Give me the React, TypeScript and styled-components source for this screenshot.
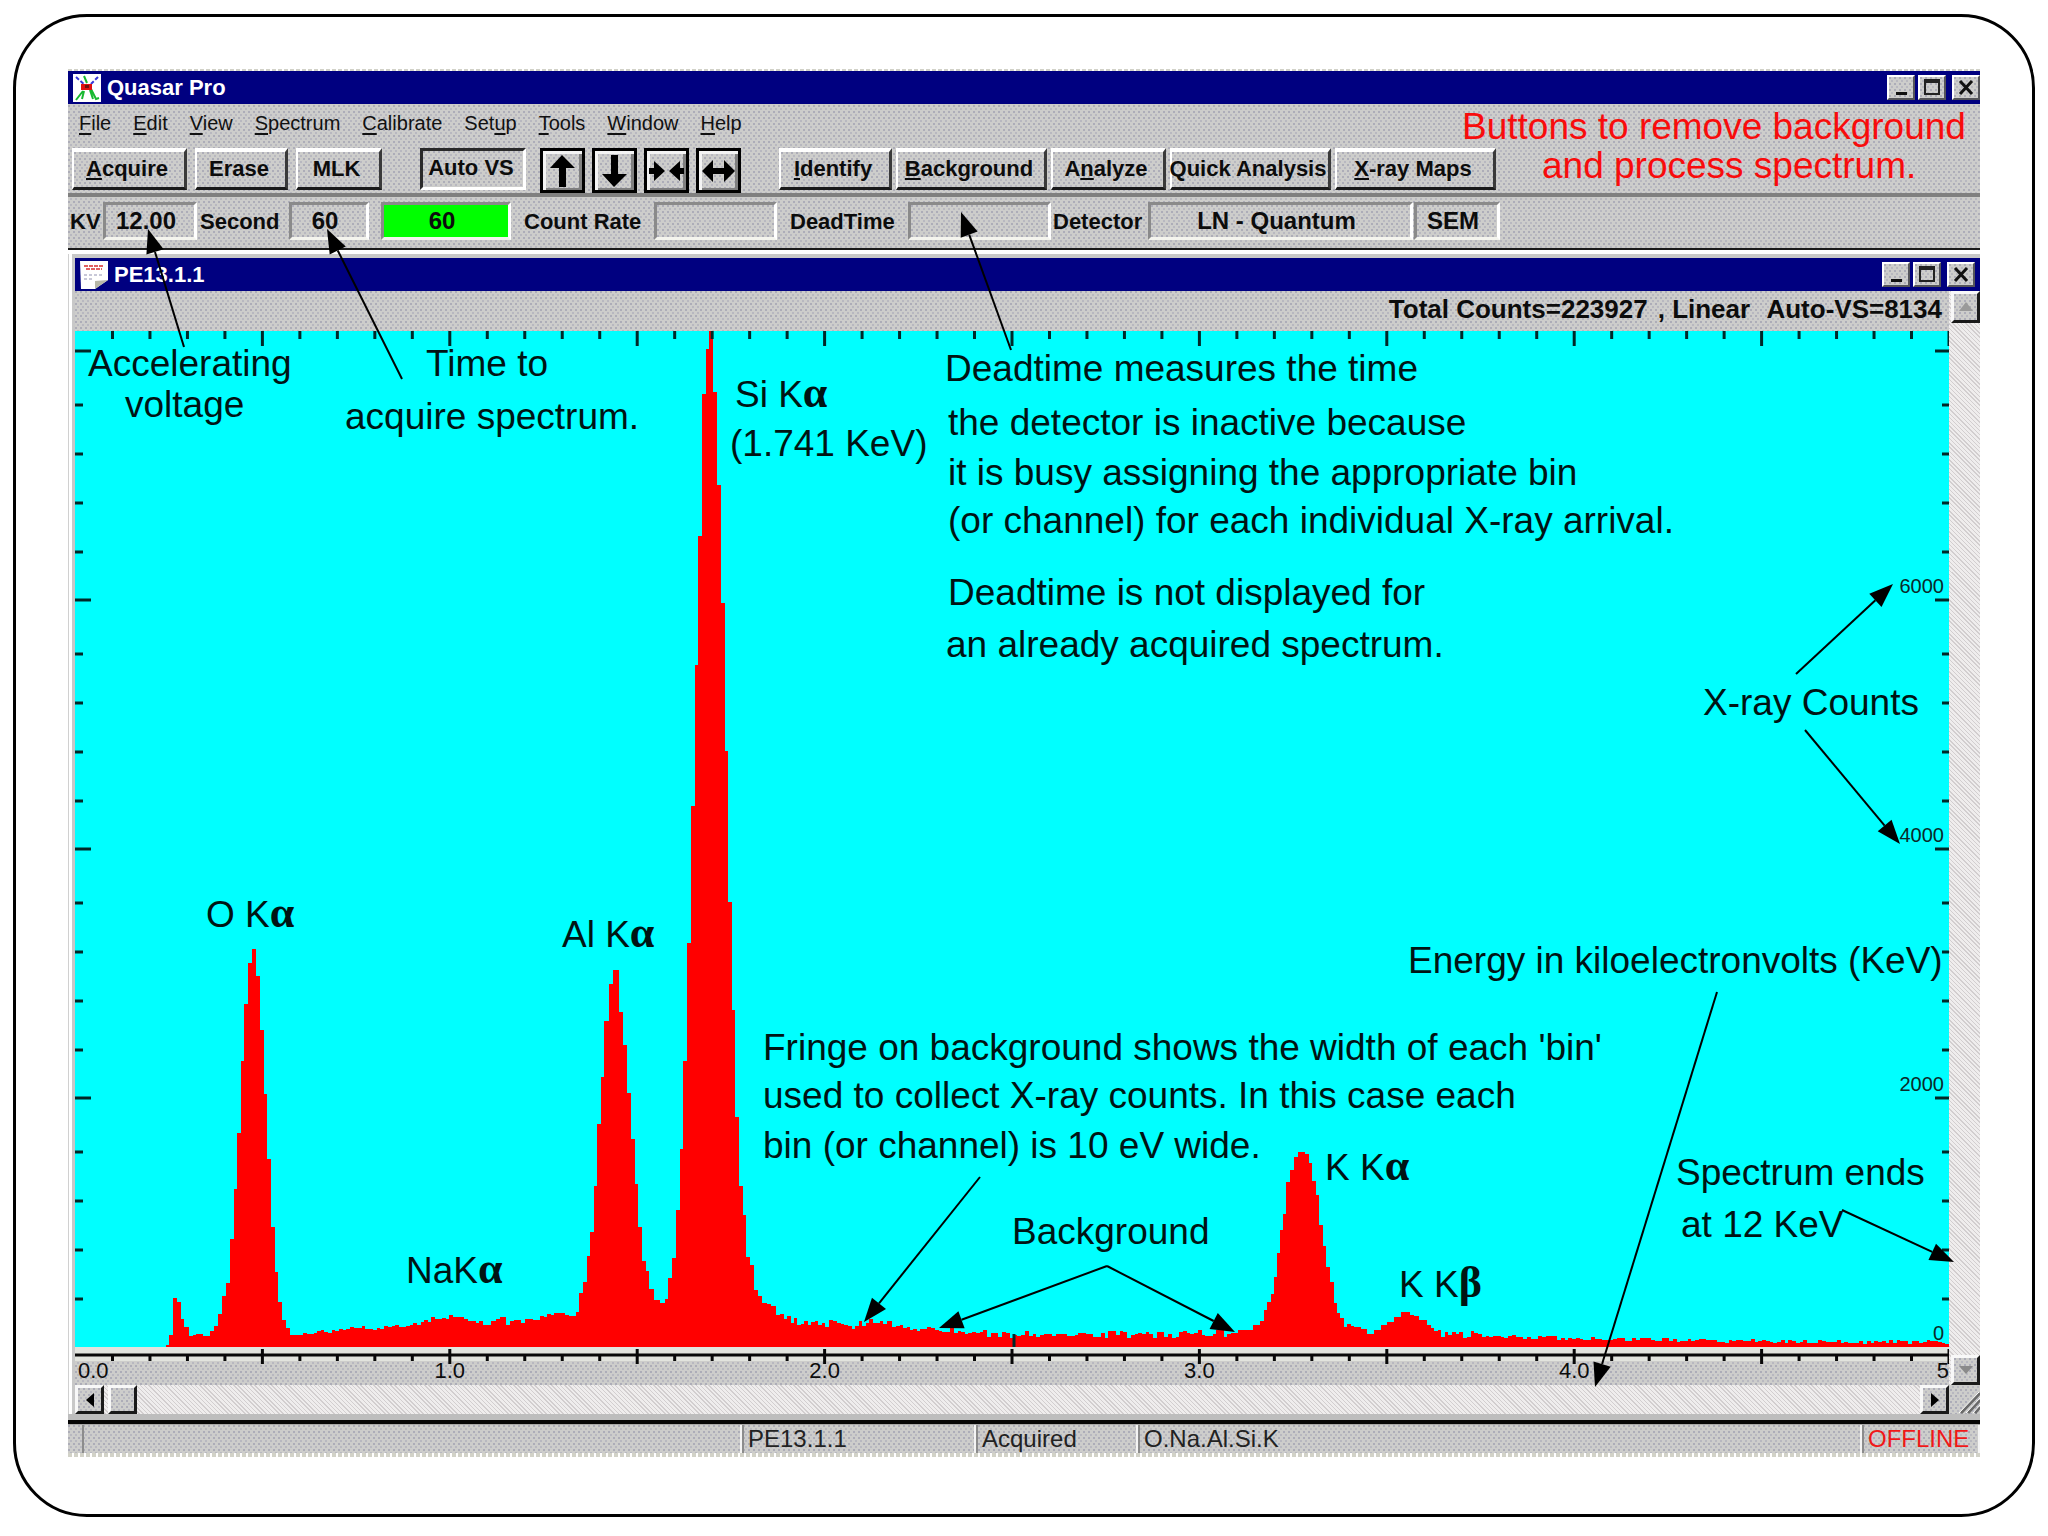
import React from "react";
import styled, { createGlobalStyle, css } from "styled-components";

const SANS = `"Liberation Sans", Arial, sans-serif`;

const GlobalStyle = createGlobalStyle`
  * { box-sizing: border-box; }
  body { margin: 0; background: #fff; }
  button, input { font: inherit; color: inherit; margin: 0; }
`;

const dither = css`
  background-color: #cdcdcb;
  background-image:
    radial-gradient(circle at 1px 1px, #adadb8 0, #adadb8 1px, transparent 1px),
    radial-gradient(circle at 3px 4px, #b8b8c0 0, #b8b8c0 1px, transparent 1px);
  background-size: 5px 6px;
`;

const trough = css`
  background-color: #efeded;
  background-image: repeating-linear-gradient(45deg, #d2cecf 0, #d2cecf 1px, transparent 1px, transparent 3px);
`;

const Page = styled.div`
  position: relative;
  padding: 14px 13px;
  font-family: ${SANS};
  color: #0c0c0c;
`;

const Frame = styled.div`
  border: 3px solid #000;
  border-radius: 74px;
  padding: 52px 52px 57px;
`;

const AppWindow = styled.main`
  ${dither}
  display: flex;
  flex-direction: column;
  overflow: hidden;
`;

const Dashes = styled.div<{ $size: number }>`
  height: ${(p) => p.$size}px;
  background: repeating-linear-gradient(90deg, #d2d2c8 0, #d2d2c8 4px, #fff 4px, #fff 6px);
`;

const TitleBar = styled.header<{ $right: number }>`
  display: flex;
  align-items: center;
  height: 33px;
  padding: 0 ${(p) => p.$right}px 0 5px;
  background: #000080;
  color: #fff;
`;

const Caption = styled.h1`
  flex: 1;
  margin: 0 0 0 6px;
  font-size: 22px;
  line-height: 32px;
  font-weight: bold;
`;

const WinButtons = styled.div`
  display: flex;
  gap: 3px;
`;

const WinButton = styled.button<{ $apart?: boolean }>`
  display: flex;
  align-items: center;
  justify-content: center;
  width: 28px;
  height: 25px;
  padding: 0;
  margin-left: ${(p) => (p.$apart ? 3 : 0)}px;
  ${dither}
  border: 2px solid;
  border-color: #fff #55555a #55555a #fff;
`;

const MenuBar = styled.nav`
  display: flex;
  align-items: center;
  gap: 22px;
  height: 41px;
  padding: 0 11px 4px;
`;

const MenuItem = styled.button`
  padding: 0;
  border: 0;
  background: none;
  font-size: 20px;
  line-height: 24px;
  color: #111;
  u { text-underline-offset: 3px; }
`;

const Toolbar = styled.div`
  display: flex;
  align-items: flex-start;
  gap: 38px;
  height: 48px;
  padding: 3px 4px 0;
`;

const Group = styled.div<{ $gap: number }>`
  display: flex;
  gap: ${(p) => p.$gap}px;
`;

const ToolButton = styled.button<{ $w: number; $pressed?: boolean }>`
  width: ${(p) => p.$w}px;
  height: 42px;
  padding: 0 4px 2px 0;
  ${dither}
  border: solid;
  border-width: ${(p) => (p.$pressed ? "3px" : "4px 3px 3px 2px")};
  border-color: ${(p) => (p.$pressed ? "#2a2a2a #fff #fff #2a2a2a" : "#fff #3a3a3a #1a1a1a #fff")};
  font-size: 22px;
  line-height: 26px;
  font-weight: bold;
  white-space: nowrap;
  display: flex;
  align-items: center;
  justify-content: center;
`;

const ArrowButton = styled.button`
  display: flex;
  align-items: center;
  justify-content: center;
  width: 45px;
  height: 45px;
  padding: 0;
  ${dither}
  border: 3px solid #000;
  box-shadow: inset 3px 3px 0 #f4f4f4, inset -3px -2px 0 #808080;
`;

const Rule = styled.div<{ $size: number; $color: string }>`
  height: ${(p) => p.$size}px;
  background: ${(p) => p.$color};
`;

const Readouts = styled.div`
  display: flex;
  align-items: flex-start;
  height: 51px;
  padding: 5px 2px 0;
  font-weight: bold;
`;

const FieldLabel = styled.label<{ $w: number; $pad: number }>`
  width: ${(p) => p.$w}px;
  padding-left: ${(p) => p.$pad}px;
  font-size: 22px;
  line-height: 40px;
  white-space: nowrap;
`;

const Field = styled.input<{ $w: number; $green?: boolean }>`
  width: ${(p) => p.$w}px;
  height: 38px;
  padding: 0 8px 0 0;
  ${dither}
  ${(p) => p.$green && css`background: #00ff00;`}
  border: 3px solid;
  border-color: #8a8a8a #fff #f4f4ee #8a8a8a;
  border-radius: 0;
  text-align: center;
  font-size: 24px;
  font-weight: bold;
`;

const Child = styled.section`
  display: flex;
  flex-direction: column;
  border-top: 4px solid #fff;
  padding: 4px 0 0 7px;
  background: linear-gradient(90deg, #d0d0d0 0, #d0d0d0 1px, #fff 1px, #fff 4px, #c8c8c8 4px);
`;

const ChildBody = styled.div`
  display: grid;
  grid-template-columns: minmax(0, 1fr) 31px;
  ${dither}
`;

const Info = styled.div`
  display: flex;
  justify-content: flex-end;
  gap: 10px;
  height: 40px;
  padding-right: 7px;
  font-size: 26px;
  line-height: 36px;
  font-weight: bold;
  white-space: pre;
`;

const Plot = styled.div`
  position: relative;
  background: #00ffff;
`;

const PlotSvg = styled.svg`
  display: block;
  width: 100%;
  height: 1016px;
`;

const CountLabel = styled.span`
  position: absolute;
  right: 5px;
  font-size: 20px;
  line-height: 20px;
  color: #0a2a2a;
`;

const Axis = styled.div`
  position: relative;
  height: 38px;
  ${dither}
`;

const AxisSvg = styled.svg`
  display: block;
  width: 100%;
  height: 18px;
`;

const EnergyLabel = styled.span<{ $align: string }>`
  position: absolute;
  top: 13px;
  font-size: 22px;
  line-height: 22px;
  transform: translateX(${(p) => p.$align});
`;

const HScroll = styled.div`
  display: flex;
  gap: 4px;
  height: 29px;
  ${trough}
`;

const VScroll = styled.div`
  grid-column: 2;
  grid-row: 1 / 4;
  display: flex;
  flex-direction: column;
  justify-content: space-between;
  padding-left: 2px;
  ${trough}
`;

const ScrollButton = styled.button<{ $h: number; $end?: boolean }>`
  display: flex;
  align-items: center;
  justify-content: center;
  width: 29px;
  height: ${(p) => p.$h}px;
  padding: 0;
  margin-left: ${(p) => (p.$end ? "auto" : "0")};
  ${dither}
  border: 3px solid;
  border-color: #f8f8f8 #1a1a1a #1a1a1a #f8f8f8;
`;

const Grip = styled.svg`
  display: block;
  width: 31px;
  height: 29px;
`;

const StatusBar = styled.footer`
  display: flex;
  height: 29px;
  padding-left: 14px;
  font-size: 24px;
  line-height: 28px;
  border-top: 1px solid #a8a8a8;
`;

const Panel = styled.div<{ $w?: number; $red?: boolean }>`
  ${(p) => (p.$w ? `width: ${p.$w}px;` : "flex: 1;")}
  padding-left: 4px;
  border-left: 2px solid #8c8c8c;
  border-right: 2px solid #f4f4f4;
  color: ${(p) => (p.$red ? "#f01818" : "#222")};
`;

const Notes = styled.div`
  position: absolute;
  inset: 0;
  pointer-events: none;
`;

const Note = styled.span<{ $x: number; $y: number; $red?: boolean }>`
  position: absolute;
  left: ${(p) => p.$x}px;
  top: ${(p) => p.$y - 41}px;
  font-size: 37px;
  line-height: 52px;
  white-space: pre;
  color: ${(p) => (p.$red ? "#f80c0c" : "#001414")};
  b {
    font-family: "Liberation Serif", "Times New Roman", serif;
    font-size: 44px;
  }
`;

const ArrowLayer = styled.svg`
  position: absolute;
  left: 0;
  top: 0;
  width: 100%;
  height: 100%;
`;

/* Envelope of the spectrum: left edge of a step, height above zero. */
const ENVELOPE: [number, number][] = [
  [0, 0], [91, 2], [94, 12], [98, 49], [102, 45], [106, 28], [109, 20], [114, 11], [128, 11], [135, 16], [139, 21],
  [143, 33], [147, 51], [151, 64], [155, 108], [159, 158], [162, 214], [166, 286], [169, 343], [173, 384], [177, 398],
  [181, 371], [185, 317], [189, 253], [192, 188], [196, 120], [200, 75], [203, 45], [207, 27], [211, 19], [215, 13],
  [228, 12], [253, 16], [275, 20], [298, 18], [324, 20], [342, 23], [360, 29], [381, 32], [389, 26], [416, 24],
  [425, 30], [431, 24], [458, 27], [472, 31], [483, 34], [494, 31], [501, 35], [504, 54], [508, 65], [512, 91],
  [515, 115], [519, 161], [522, 223], [526, 270], [529, 326], [534, 363], [538, 377], [544, 335], [548, 302],
  [552, 254], [556, 208], [560, 163], [563, 120], [567, 86], [571, 76], [574, 58], [579, 47], [585, 44], [590, 48],
  [593, 69], [597, 89], [601, 137], [605, 198], [608, 286], [612, 404], [616, 541], [620, 682], [623, 811],
  [627, 953], [631, 998], [634, 1016], [638, 955], [642, 862], [646, 744], [650, 596], [653, 445], [657, 337],
  [660, 230], [664, 161], [668, 132], [671, 90], [675, 82], [679, 57], [687, 45], [696, 37], [705, 30], [719, 27],
  [736, 22], [754, 24], [777, 21], [794, 25], [808, 23], [821, 24], [835, 20], [852, 18], [879, 17], [897, 14],
  [942, 12], [977, 14], [1067, 12], [1134, 14], [1156, 14], [1163, 17], [1169, 18], [1178, 22], [1185, 26],
  [1189, 37], [1192, 45], [1196, 53], [1199, 70], [1202, 94], [1205, 117], [1208, 133], [1211, 165], [1215, 177],
  [1219, 190], [1223, 195], [1230, 193], [1234, 184], [1237, 166], [1241, 152], [1244, 122], [1248, 101],
  [1251, 80], [1255, 65], [1259, 44], [1262, 34], [1265, 29], [1269, 22], [1286, 18], [1292, 13], [1299, 17],
  [1306, 22], [1312, 25], [1319, 30], [1326, 35], [1330, 32], [1339, 30], [1348, 26], [1356, 16], [1373, 12],
  [1407, 12], [1433, 10], [1561, 8], [1646, 6], [1874, 5],
];

const PLOT_W = 1874;
const PLOT_H = 1016;

/* Narrow steps are drawn as they are; wide ones are split into 10 eV bins with a small ripple. */
function spectrumPath() {
  const bin = PLOT_W / 500;
  let d = `M0 ${PLOT_H}`;
  for (let i = 0; i < ENVELOPE.length - 1; i++) {
    const [x0, h0] = ENVELOPE[i];
    const [x1, h1] = ENVELOPE[i + 1];
    if (x1 - x0 < 8 || i === 0) {
      d += `V${PLOT_H - h0}H${x1}`;
      continue;
    }
    const n = Math.round((x1 - x0) / bin);
    for (let k = 0; k < n; k++) {
      const seed = Math.sin((x0 + k * 7) * 12.9898) * 43758.5453;
      const amp = x0 > 1380 ? 4 : x0 > 690 ? 8 : 5;
      const ripple = (seed - Math.floor(seed) - 0.5) * amp;
      const h = h0 + ((h1 - h0) * k) / n + ripple;
      d += `V${Math.round(PLOT_H - h)}H${(x0 + ((x1 - x0) * (k + 1)) / n).toFixed(1)}`;
    }
  }
  return `${d}V${PLOT_H}Z`;
}

const SPECTRUM = spectrumPath();
const TENTHS = Array.from({ length: 51 }, (_, i) => i);
const COUNT_TICKS = [0, 2000, 4000, 6000, 8000].flatMap((c, m) =>
  [0, 48, 97, 146, 195]
    .map((o) => ({ y: PLOT_H - m * 249 - o, major: o === 0 }))
    .filter((t) => t.y > 10 && !(m === 0 && t.major)),
);

const NOTES: { x: number; y: number; t: string; g?: string; red?: boolean }[] = [
  { x: 1462, y: 142, t: "Buttons to remove background", red: true },
  { x: 1542, y: 181, t: "and process spectrum.", red: true },
  { x: 88, y: 379, t: "Accelerating" },
  { x: 125, y: 420, t: "voltage" },
  { x: 426, y: 379, t: "Time to" },
  { x: 345, y: 432, t: "acquire spectrum." },
  { x: 735, y: 408, t: "Si K", g: "α" },
  { x: 730, y: 459, t: "(1.741 KeV)" },
  { x: 945, y: 384, t: "Deadtime measures the time" },
  { x: 948, y: 438, t: "the detector is inactive because" },
  { x: 948, y: 488, t: "it is busy assigning the appropriate bin" },
  { x: 948, y: 536, t: "(or channel) for each individual X-ray arrival." },
  { x: 948, y: 608, t: "Deadtime is not displayed for" },
  { x: 946, y: 660, t: "an already acquired spectrum." },
  { x: 1703, y: 718, t: "X-ray Counts" },
  { x: 206, y: 928, t: "O K", g: "α" },
  { x: 562, y: 948, t: "Al K", g: "α" },
  { x: 406, y: 1284, t: "NaK", g: "α" },
  { x: 1408, y: 976, t: "Energy in kiloelectronvolts (KeV)" },
  { x: 763, y: 1063, t: "Fringe on background shows the width of each 'bin'" },
  { x: 763, y: 1111, t: "used to collect X-ray counts. In this case each" },
  { x: 763, y: 1161, t: "bin (or channel) is 10 eV wide." },
  { x: 1012, y: 1247, t: "Background" },
  { x: 1325, y: 1181, t: "K K", g: "α" },
  { x: 1399, y: 1298, t: "K K", g: "β" },
  { x: 1676, y: 1188, t: "Spectrum ends" },
  { x: 1681, y: 1240, t: "at 12 KeV" },
];

const ARROWS: [number, number, number, number][] = [
  [184, 347, 148, 229],
  [402, 379, 327, 229],
  [1011, 350, 961, 212],
  [980, 1177, 864, 1322],
  [1107, 1266, 939, 1328],
  [1107, 1266, 1235, 1332],
  [1717, 992, 1595, 1387],
  [1842, 1210, 1954, 1262],
  [1796, 674, 1893, 584],
  [1805, 730, 1900, 844],
];

function Arrow({ p }: { p: [number, number, number, number] }) {
  const [x0, y0, x1, y1] = p;
  const len = Math.hypot(x1 - x0, y1 - y0);
  const ux = (x1 - x0) / len;
  const uy = (y1 - y0) / len;
  const bx = x1 - ux * 24;
  const by = y1 - uy * 24;
  const pts = `${x1},${y1} ${bx - uy * 9},${by + ux * 9} ${bx + uy * 9},${by - ux * 9}`;
  return (
    <g>
      <line x1={x0} y1={y0} x2={bx} y2={by} stroke="#000" strokeWidth="2" />
      <polygon points={pts} fill="#000" />
    </g>
  );
}

function Ctl({ kind }: { kind: "min" | "max" | "close" }) {
  return (
    <svg width="20" height="19" viewBox="0 0 20 19" aria-hidden="true">
      {kind === "min" && <rect x="5" y="14" width="11" height="3" fill="#111" />}
      {kind === "max" && (
        <g fill="none" stroke="#222">
          <rect x="3" y="3" width="14" height="13" strokeWidth="2" />
          <path d="M2 3H18" strokeWidth="4" />
        </g>
      )}
      {kind === "close" && <path d="M4 3L16 16M16 3L4 16" stroke="#111" strokeWidth="3" fill="none" />}
    </svg>
  );
}

function Controls({ name }: { name: string }) {
  return (
    <WinButtons>
      <WinButton aria-label={`Minimize ${name}`}><Ctl kind="min" /></WinButton>
      <WinButton aria-label={`Maximize ${name}`}><Ctl kind="max" /></WinButton>
      <WinButton aria-label={`Close ${name}`} $apart><Ctl kind="close" /></WinButton>
    </WinButtons>
  );
}

const TOOL_ARROWS: [string, string][] = [
  ["Scale up", "M18 3L31 16H22V35H15V16H6Z"],
  ["Scale down", "M18 35L31 22H22V3H15V22H6Z"],
  ["Compress", "M1 16H6V9L17 19L6 29V22H1ZM36 16H32V9L21 19L32 29V22H36Z"],
  ["Expand", "M2 19L13 8V16H24V8L35 19L24 30V22H13V30Z"],
];

const MENU = ["_File", "_Edit", "_View", "_Spectrum", "_Calibrate", "Set_up", "_Tools", "_Window", "_Help"];

/* The letter after an underscore is the access key. */
function Keyed({ text }: { text: string }) {
  const i = text.indexOf("_");
  if (i < 0) return <span>{text}</span>;
  return (
    <span>
      {text.slice(0, i)}
      <u>{text[i + 1]}</u>
      {text.slice(i + 2)}
    </span>
  );
}

const FIELDS: { id: string; label: string; lw: number; pad: number; w: number; v: string }[] = [
  { id: "kv", label: "KV", lw: 33, pad: 0, w: 94, v: "12.00" },
  { id: "second", label: "Second", lw: 92, pad: 3, w: 80, v: "60" },
  { id: "elapsed", label: "", lw: 12, pad: 0, w: 130, v: "60" },
  { id: "rate", label: "Count Rate", lw: 143, pad: 13, w: 123, v: "" },
  { id: "dead", label: "DeadTime", lw: 131, pad: 13, w: 143, v: "" },
  { id: "detector", label: "Detector", lw: 97, pad: 2, w: 265, v: "LN - Quantum" },
  { id: "column", label: "", lw: 1, pad: 0, w: 86, v: "SEM" },
];

export default function App() {
  return (
    <Page>
      <GlobalStyle />
      <Frame>
        <AppWindow>
          <Dashes $size={2} />
          <TitleBar $right={0}>
            <svg width="28" height="28" viewBox="0 0 28 28" aria-hidden="true">
              <rect width="28" height="28" fill="#fff" />
              <path d="M3 3L13 12M25 3L15 13" stroke="#3838d8" strokeWidth="2" strokeDasharray="4 2" />
              <path d="M11 2L14 9M10 17L3 26M11 17L9 25M17 16L20 25M18 15L23 25L26 24" fill="none" stroke="#18b830" strokeWidth="2" />
              <rect x="8" y="10" width="11" height="6" fill="#e01010" />
              <rect x="12" y="11" width="4" height="3" fill="#701010" />
            </svg>
            <Caption>Quasar Pro</Caption>
            <Controls name="Quasar Pro" />
          </TitleBar>
          <MenuBar>
            {MENU.map((m) => (
              <MenuItem key={m}><Keyed text={m} /></MenuItem>
            ))}
          </MenuBar>
          <Toolbar>
            <Group $gap={8}>
              <ToolButton $w={115}><Keyed text="_Acquire" /></ToolButton>
              <ToolButton $w={93}>Erase</ToolButton>
              <ToolButton $w={86}>MLK</ToolButton>
            </Group>
            <Group $gap={14}>
              <ToolButton $w={106} $pressed aria-pressed="true">Auto VS</ToolButton>
              <Group $gap={7}>
                {TOOL_ARROWS.map(([name, d]) => (
                  <ArrowButton key={name} aria-label={name}>
                    <svg width="37" height="38" viewBox="0 0 37 38" aria-hidden="true"><path d={d} /></svg>
                  </ArrowButton>
                ))}
              </Group>
            </Group>
            <Group $gap={4}>
              <ToolButton $w={113}><Keyed text="_Identify" /></ToolButton>
              <ToolButton $w={151}><Keyed text="_Background" /></ToolButton>
              <ToolButton $w={115}><Keyed text="A_nalyze" /></ToolButton>
              <ToolButton $w={161}>Quick Analysis</ToolButton>
              <ToolButton $w={161}><Keyed text="_X-ray Maps" /></ToolButton>
            </Group>
          </Toolbar>
          <Rule $size={4} $color="#808080" />
          <Readouts>
            {FIELDS.map((f) => (
              <React.Fragment key={f.id}>
                <FieldLabel htmlFor={f.id} $w={f.lw} $pad={f.pad}>{f.label}</FieldLabel>
                <Field
                  id={f.id}
                  $w={f.w}
                  $green={f.id === "elapsed"}
                  defaultValue={f.v}
                  aria-label={f.label || f.id}
                  readOnly
                />
              </React.Fragment>
            ))}
          </Readouts>
          <Rule $size={2} $color="#1c1c1c" />
          <Child>
            <TitleBar $right={5}>
              <svg width="28" height="30" viewBox="0 0 28 30" aria-hidden="true">
                <path d="M0 1H28V20L15 29H1Z" fill="#fff" />
                <path d="M4 6H24M6 9H22" stroke="#e06060" strokeWidth="2" strokeDasharray="4 1" />
                <path d="M4 15H22M4 19H14" stroke="#c8c8d8" strokeWidth="2" strokeDasharray="3 2" />
                <path d="M15 29V21L28 20Z" fill="#b8b8a8" />
              </svg>
              <Caption as="h2">PE13.1.1</Caption>
              <Controls name="PE13.1.1" />
            </TitleBar>
            <ChildBody>
              <Info>
                <span>Total Counts=223927</span>
                <span>, Linear</span>
                <span> Auto-VS=8134</span>
              </Info>
              <Plot>
                <PlotSvg viewBox={`0 0 ${PLOT_W} ${PLOT_H}`} preserveAspectRatio="none" role="img" aria-label="X-ray spectrum">
                  <path d={SPECTRUM} fill="#ff0000" shapeRendering="crispEdges" />
                  <g stroke="#002828" strokeWidth="3">
                    {TENTHS.slice(1).map((i) => (
                      <line key={i} x1={i * 37.48} x2={i * 37.48} y1="0" y2={i % 5 ? 8 : 15} />
                    ))}
                    {COUNT_TICKS.map((t) => (
                      <React.Fragment key={t.y}>
                        <line x1="0" x2={t.major ? 16 : 8} y1={t.y} y2={t.y} />
                        <line x1={PLOT_W - (t.major ? 14 : 7)} x2={PLOT_W} y1={t.y} y2={t.y} />
                      </React.Fragment>
                    ))}
                    <line x1="939" x2="939" y1="1003" y2="1016" />
                  </g>
                </PlotSvg>
                {[0, 2000, 4000, 6000].map((c, m) => (
                  <CountLabel key={c} style={{ top: PLOT_H - m * 249 - 24 }}>{c}</CountLabel>
                ))}
              </Plot>
              <Axis>
                <AxisSvg viewBox={`0 0 ${PLOT_W} 18`} preserveAspectRatio="none" aria-hidden="true">
                  <rect width={PLOT_W} height="14" fill="#e2e4de" />
                  <g stroke="#080808" strokeWidth="3">
                    <line x1="0" x2={PLOT_W} y1="8" y2="8" />
                    {TENTHS.slice(1).map((i) => (
                      <line key={i} x1={i * 37.48} x2={i * 37.48} y1={i % 5 ? 8 : 2} y2={i % 5 ? 14 : 17} />
                    ))}
                  </g>
                </AxisSvg>
                {[0, 1, 2, 3, 4, 5].map((k) => (
                  <EnergyLabel key={k} style={{ left: `${k * 20}%` }} $align={k === 0 ? "3px" : k === 5 ? "-100%" : "-50%"}>
                    {k === 5 ? "5" : `${k}.0`}
                  </EnergyLabel>
                ))}
              </Axis>
              <VScroll>
                <ScrollButton $h={32} aria-label="Scroll up">
                  <svg width="16" height="12" viewBox="0 0 16 12" aria-hidden="true"><path d="M8 1L15 10H1Z" fill="#9a9a9a" /></svg>
                </ScrollButton>
                <ScrollButton $h={30} aria-label="Scroll down">
                  <svg width="16" height="12" viewBox="0 0 16 12" aria-hidden="true"><path d="M8 10L15 2H1Z" fill="#8a8a8a" /></svg>
                </ScrollButton>
              </VScroll>
              <HScroll>
                <ScrollButton $h={29} aria-label="Scroll left">
                  <svg width="12" height="16" viewBox="0 0 12 16" aria-hidden="true"><path d="M2 8L10 1V15Z" /></svg>
                </ScrollButton>
                <ScrollButton $h={29} aria-label="Scroll position" />
                <ScrollButton $h={29} $end aria-label="Scroll right">
                  <svg width="12" height="16" viewBox="0 0 12 16" aria-hidden="true"><path d="M10 8L2 1V15Z" /></svg>
                </ScrollButton>
              </HScroll>
              <Grip viewBox="0 0 31 29" aria-hidden="true">
                <path d="M12 28L31 8M19 28L31 15M26 28L31 22" stroke="#6a6a6a" strokeWidth="3" />
                <path d="M10 28L30 7M17 28L31 13M24 28L31 20" stroke="#fff" strokeWidth="1" />
              </Grip>
            </ChildBody>
          </Child>
          <Rule $size={6} $color="#bdbdbd" />
          <Rule $size={4} $color="#050505" />
          <StatusBar>
            <Panel $w={660} />
            <Panel $w={234}>PE13.1.1</Panel>
            <Panel $w={162}>Acquired</Panel>
            <Panel>O.Na.Al.Si.K</Panel>
            <Panel $w={118} $red>OFFLINE</Panel>
          </StatusBar>
          <Dashes $size={4} />
        </AppWindow>
      </Frame>
      <Notes>
        <ArrowLayer aria-hidden="true">
          {ARROWS.map((p) => (
            <Arrow key={p.join()} p={p} />
          ))}
        </ArrowLayer>
        {NOTES.map((n) => (
          <Note key={`${n.x}-${n.y}`} $x={n.x} $y={n.y} $red={n.red}>
            {n.t}
            {n.g && <b>{n.g}</b>}
          </Note>
        ))}
      </Notes>
    </Page>
  );
}
